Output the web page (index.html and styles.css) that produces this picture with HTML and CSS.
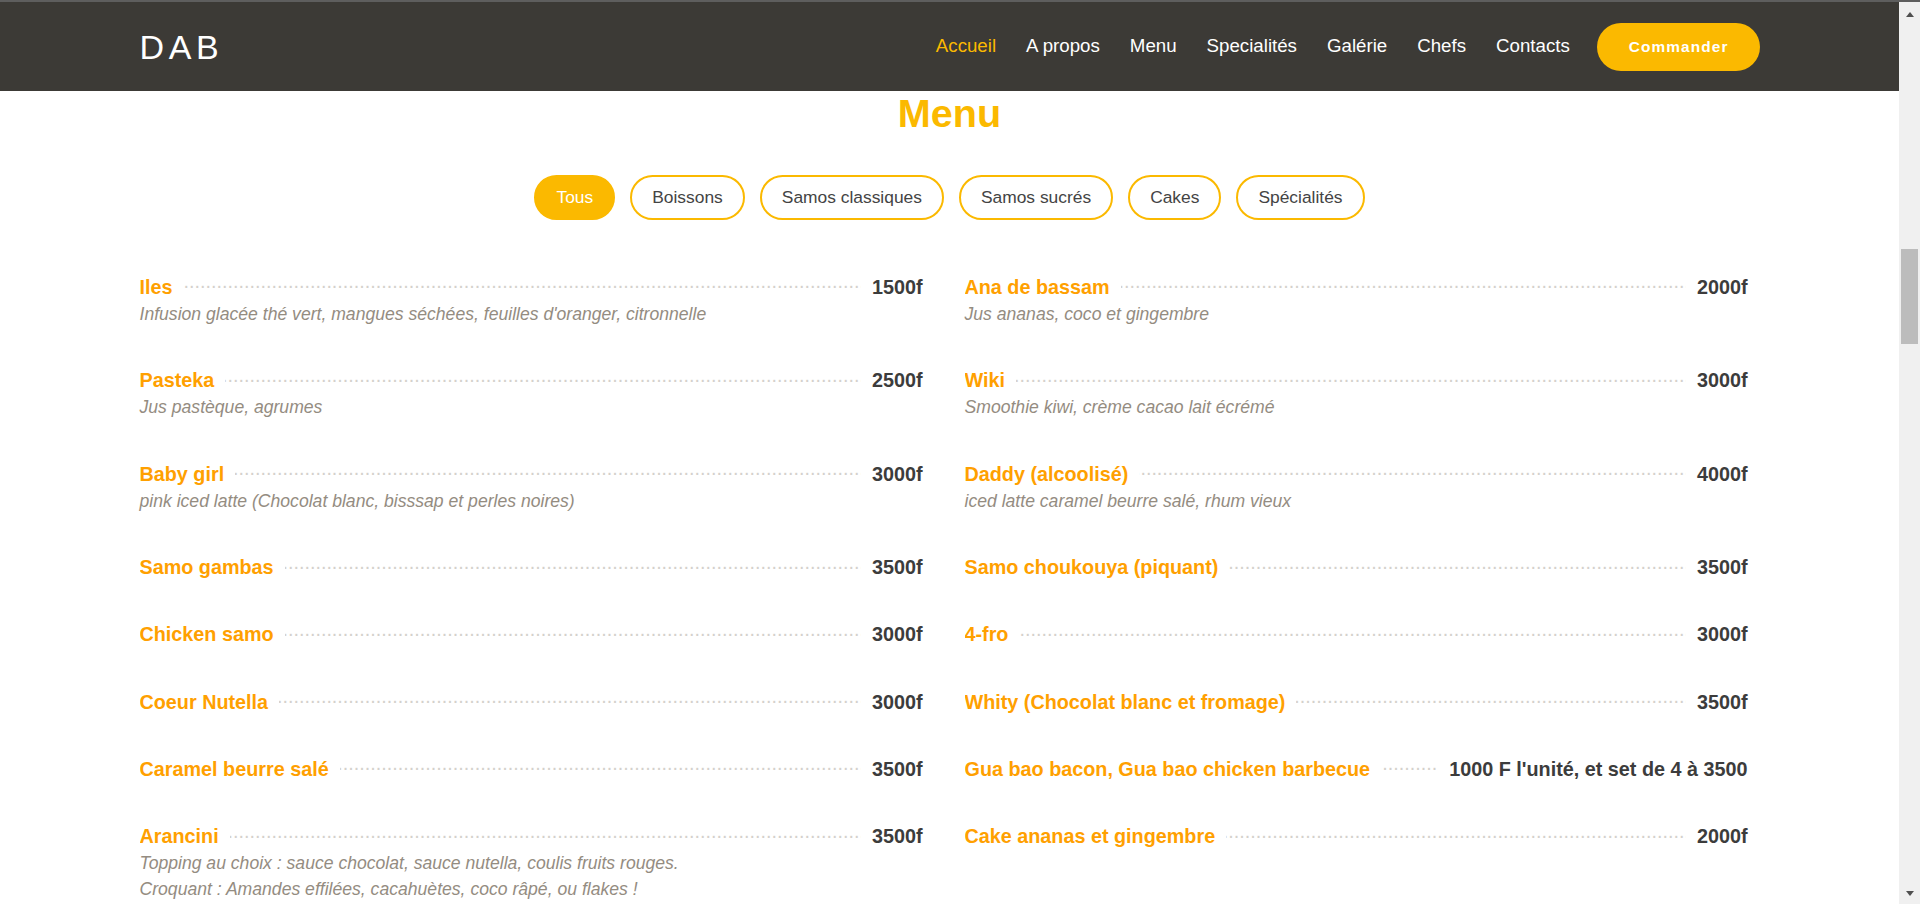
FILE: index.html
```html
<!DOCTYPE html>
<html lang="fr">
<head>
<meta charset="utf-8">
<title>DAB - Menu</title>
<link rel="stylesheet" href="styles.css">
</head>
<body>
<div class="topline"></div>
<div class="window">
  <div class="viewport">
    <header class="header">
      <div class="container header-inner">
        <a class="logo">DAB</a>
        <div class="header-right">
          <nav class="nav">
            <a class="active">Accueil</a>
            <a>A propos</a>
            <a>Menu</a>
            <a>Specialités</a>
            <a>Galérie</a>
            <a>Chefs</a>
            <a>Contacts</a>
          </nav>
          <a class="btn-order">Commander</a>
        </div>
      </div>
    </header>

    <section class="menu">
      <h2 class="title">Menu</h2>
      <ul class="filters">
        <li class="filter active">Tous</li>
        <li class="filter">Boissons</li>
        <li class="filter">Samos classiques</li>
        <li class="filter">Samos sucrés</li>
        <li class="filter">Cakes</li>
        <li class="filter">Spécialités</li>
      </ul>

      <div class="container menu-grid">
        <div class="item">
          <div class="item-head"><span class="name">Iles</span><span class="price">1500f</span></div>
          <div class="desc">Infusion glacée thé vert, mangues séchées, feuilles d'oranger, citronnelle</div>
        </div>
        <div class="item">
          <div class="item-head"><span class="name">Ana de bassam</span><span class="price">2000f</span></div>
          <div class="desc">Jus ananas, coco et gingembre</div>
        </div>

        <div class="item">
          <div class="item-head"><span class="name">Pasteka</span><span class="price">2500f</span></div>
          <div class="desc">Jus pastèque, agrumes</div>
        </div>
        <div class="item">
          <div class="item-head"><span class="name">Wiki</span><span class="price">3000f</span></div>
          <div class="desc">Smoothie kiwi, crème cacao lait écrémé</div>
        </div>

        <div class="item">
          <div class="item-head"><span class="name">Baby girl</span><span class="price">3000f</span></div>
          <div class="desc">pink iced latte (Chocolat blanc, bisssap et perles noires)</div>
        </div>
        <div class="item">
          <div class="item-head"><span class="name">Daddy (alcoolisé)</span><span class="price">4000f</span></div>
          <div class="desc">iced latte caramel beurre salé, rhum vieux</div>
        </div>

        <div class="item">
          <div class="item-head"><span class="name">Samo gambas</span><span class="price">3500f</span></div>
        </div>
        <div class="item">
          <div class="item-head"><span class="name">Samo choukouya (piquant)</span><span class="price">3500f</span></div>
        </div>

        <div class="item">
          <div class="item-head"><span class="name">Chicken samo</span><span class="price">3000f</span></div>
        </div>
        <div class="item">
          <div class="item-head"><span class="name">4-fro</span><span class="price">3000f</span></div>
        </div>

        <div class="item">
          <div class="item-head"><span class="name">Coeur Nutella</span><span class="price">3000f</span></div>
        </div>
        <div class="item">
          <div class="item-head"><span class="name">Whity (Chocolat blanc et fromage)</span><span class="price">3500f</span></div>
        </div>

        <div class="item">
          <div class="item-head"><span class="name">Caramel beurre salé</span><span class="price">3500f</span></div>
        </div>
        <div class="item">
          <div class="item-head"><span class="name">Gua bao bacon, Gua bao chicken barbecue</span><span class="price">1000 F l'unité, et set de 4 à 3500</span></div>
        </div>

        <div class="item">
          <div class="item-head"><span class="name">Arancini</span><span class="price">3500f</span></div>
          <div class="desc">Topping au choix : sauce chocolat, sauce nutella, coulis fruits rouges.<br>Croquant : Amandes effilées, cacahuètes, coco râpé, ou flakes !</div>
        </div>
        <div class="item">
          <div class="item-head"><span class="name">Cake ananas et gingembre</span><span class="price">2000f</span></div>
        </div>
      </div>
    </section>
  </div>

  <div class="scrollbar">
    <div class="sb-arrow sb-up"></div>
    <div class="sb-track"><div class="sb-thumb"></div></div>
    <div class="sb-arrow sb-down"></div>
  </div>
</div>
</body>
</html>
```

FILE: styles.css
```css
* {
  box-sizing: border-box;
}

html,
body {
  margin: 0;
  padding: 0;
  height: 904px;
  overflow: hidden;
  background: #ffffff;
}

body {
  font-family: "Liberation Sans", Arial, Helvetica, sans-serif;
  color: #444444;
}

.topline {
  height: 2px;
  background: #5e5e5e;
}

.window {
  display: flex;
  height: 902px;
}

.viewport {
  flex: 1;
  overflow: hidden;
}

.container {
  width: 1620px;
  margin: 0 auto;
}

/* ---------- Header ---------- */
.header {
  height: 89px;
  background: #3c3a36;
}

.header-inner {
  height: 100%;
  display: flex;
  align-items: center;
  justify-content: space-between;
}

.logo {
  color: #ffffff;
  font-size: 34px;
  letter-spacing: 4.6px;
  line-height: 1;
}

.header-right {
  display: flex;
  align-items: center;
}

.nav {
  display: flex;
  align-items: center;
  gap: 30px;
}

.nav a {
  color: #ffffff;
  font-size: 18.7px;
  line-height: 1;
}

.nav a.active {
  color: #fbb900;
}

.btn-order {
  margin-left: 27px;
  height: 48px;
  line-height: 48px;
  padding: 0 31px 0 32px;
  border-radius: 50px;
  background: #fbb900;
  color: #ffffff;
  font-size: 15.4px;
  font-weight: bold;
  letter-spacing: 1.1px;
  white-space: nowrap;
}

/* ---------- Menu ---------- */
.title {
  margin: 0;
  text-align: center;
  font-size: 39.6px;
  line-height: 45.5px;
  font-weight: bold;
  color: #fbb900;
}

.filters {
  list-style: none;
  margin: 38.5px 0 0 0;
  padding: 0;
  display: flex;
  justify-content: center;
  gap: 15px;
}

.filter {
  height: 45px;
  line-height: 41px;
  padding: 0 20px;
  border: 2px solid #fbb900;
  border-radius: 50px;
  font-size: 17.4px;
  color: #444444;
  background: #ffffff;
}

.filter.active {
  background: #fbb900;
  color: #ffffff;
}

.menu-grid {
  margin-top: 52.5px;
  display: grid;
  grid-template-columns: 1fr 1fr;
  column-gap: 30px;
  row-gap: 39.2px;
}

.item-head {
  display: flex;
  justify-content: space-between;
  position: relative;
  overflow: hidden;
  font-size: 19.8px;
  line-height: 28px;
  font-weight: bold;
}

.item-head::after {
  content: "........................................................................................................................................................................";
  position: absolute;
  left: 22px;
  right: 0;
  top: -5.4px;
  z-index: 1;
  color: #d4d1cc;
  font-weight: normal;
  white-space: nowrap;
  overflow: hidden;
}

.name {
  position: relative;
  z-index: 3;
  background: #ffffff;
  padding-right: 11px;
  color: #ffa000;
  white-space: nowrap;
}

.price {
  position: relative;
  z-index: 3;
  background: #ffffff;
  padding: 0 12px 0 11px;
  color: #3c3c3c;
  white-space: nowrap;
}

.desc {
  font-style: italic;
  font-size: 17.6px;
  line-height: 26.4px;
  color: #948c81;
}

/* ---------- Scrollbar (window chrome) ---------- */
.scrollbar {
  width: 21px;
  background: #f0f0f0;
  display: flex;
  flex-direction: column;
  align-items: center;
}

.sb-arrow {
  width: 0;
  height: 0;
  border-left: 4.5px solid transparent;
  border-right: 4.5px solid transparent;
}

.sb-up {
  margin-top: 10px;
  border-bottom: 5px solid #505050;
}

.sb-down {
  margin-bottom: 8px;
  border-top: 5px solid #505050;
}

.sb-track {
  flex: 1;
  width: 100%;
  padding: 0 2px;
}

.sb-thumb {
  margin-top: 232px;
  height: 95px;
  background: #bcbcbc;
}
```
